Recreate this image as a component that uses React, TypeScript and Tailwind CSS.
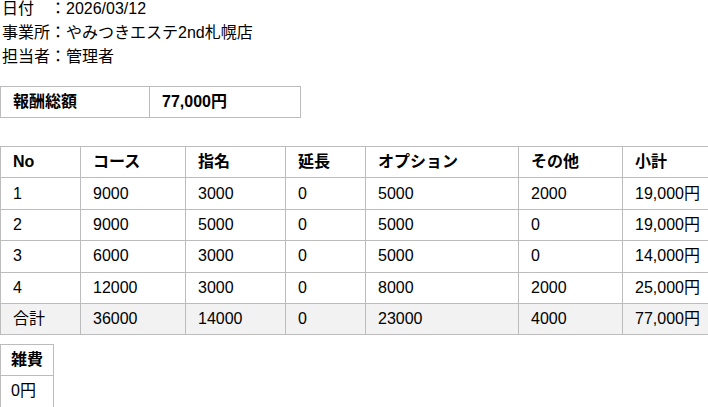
const rows = [
  { no: '1', course: '9000', shimei: '3000', encho: '0', option: '5000', other: '2000', subtotal: '19,000円' },
  { no: '2', course: '9000', shimei: '5000', encho: '0', option: '5000', other: '0', subtotal: '19,000円' },
  { no: '3', course: '6000', shimei: '3000', encho: '0', option: '5000', other: '0', subtotal: '14,000円' },
  { no: '4', course: '12000', shimei: '3000', encho: '0', option: '8000', other: '2000', subtotal: '25,000円' },
]

const total = { no: '合計', course: '36000', shimei: '14000', encho: '0', option: '23000', other: '4000', subtotal: '77,000円' }

const cols = ['No', 'コース', '指名', '延長', 'オプション', 'その他', '小計']

const cell = 'border border-[#bcbcbc] pl-3 pr-2 h-[31px] text-left align-middle'
const row = 'border border-[#bcbcbc] pl-3 pr-2 h-[31.4px] text-left align-middle'

export default function App() {
  return (
    <div
      className="w-[708px] h-[407px] overflow-hidden bg-white text-black text-[16px] leading-[20px]"
      style={{ fontFamily: '"Liberation Sans", "Noto Sans CJK JP", sans-serif' }}
    >
      <div className="flex flex-col gap-[6px] pl-[2px]">
        <div className="leading-[18px]">日付　：2026/03/12</div>
        <div className="leading-[18px]">事業所：やみつきエステ2nd札幌店</div>
        <div className="leading-[18px]">担当者：管理者</div>
      </div>

      <table className="mt-[20px] border-collapse table-fixed w-[301px]">
        <colgroup>
          <col className="w-[149px]" />
          <col />
        </colgroup>
        <tbody>
          <tr>
            <th className={`${cell} font-bold`}>報酬総額</th>
            <td className={`${cell} font-bold`}>77,000円</td>
          </tr>
        </tbody>
      </table>

      <table className="mt-[28px] border-collapse table-fixed w-[709px]">
        <colgroup>
          <col className="w-[80px]" />
          <col className="w-[105px]" />
          <col className="w-[100px]" />
          <col className="w-[80px]" />
          <col className="w-[153px]" />
          <col className="w-[104px]" />
          <col />
        </colgroup>
        <thead>
          <tr>
            {cols.map((c) => (
              <th key={c} className={`${row} font-bold`}>
                {c}
              </th>
            ))}
          </tr>
        </thead>
        <tbody>
          {[...rows, total].map((r) => (
            <tr key={r.no} className={r.no === '合計' ? 'bg-[#f2f2f2]' : ''}>
              <td className={row}>{r.no}</td>
              <td className={row}>{r.course}</td>
              <td className={row}>{r.shimei}</td>
              <td className={row}>{r.encho}</td>
              <td className={row}>{r.option}</td>
              <td className={row}>{r.other}</td>
              <td className={row}>{r.subtotal}</td>
            </tr>
          ))}
        </tbody>
      </table>

      <table className="mt-[9px] border-collapse table-fixed w-[54px]">
        <tbody>
          <tr>
            <th className={`${cell} font-bold pl-[10px]`}>雑費</th>
          </tr>
          <tr>
            <td className="border border-[#bcbcbc] pl-[10px] h-[31px] align-top pt-[5px] pb-[10px] text-left">0円</td>
          </tr>
        </tbody>
      </table>
    </div>
  )
}
